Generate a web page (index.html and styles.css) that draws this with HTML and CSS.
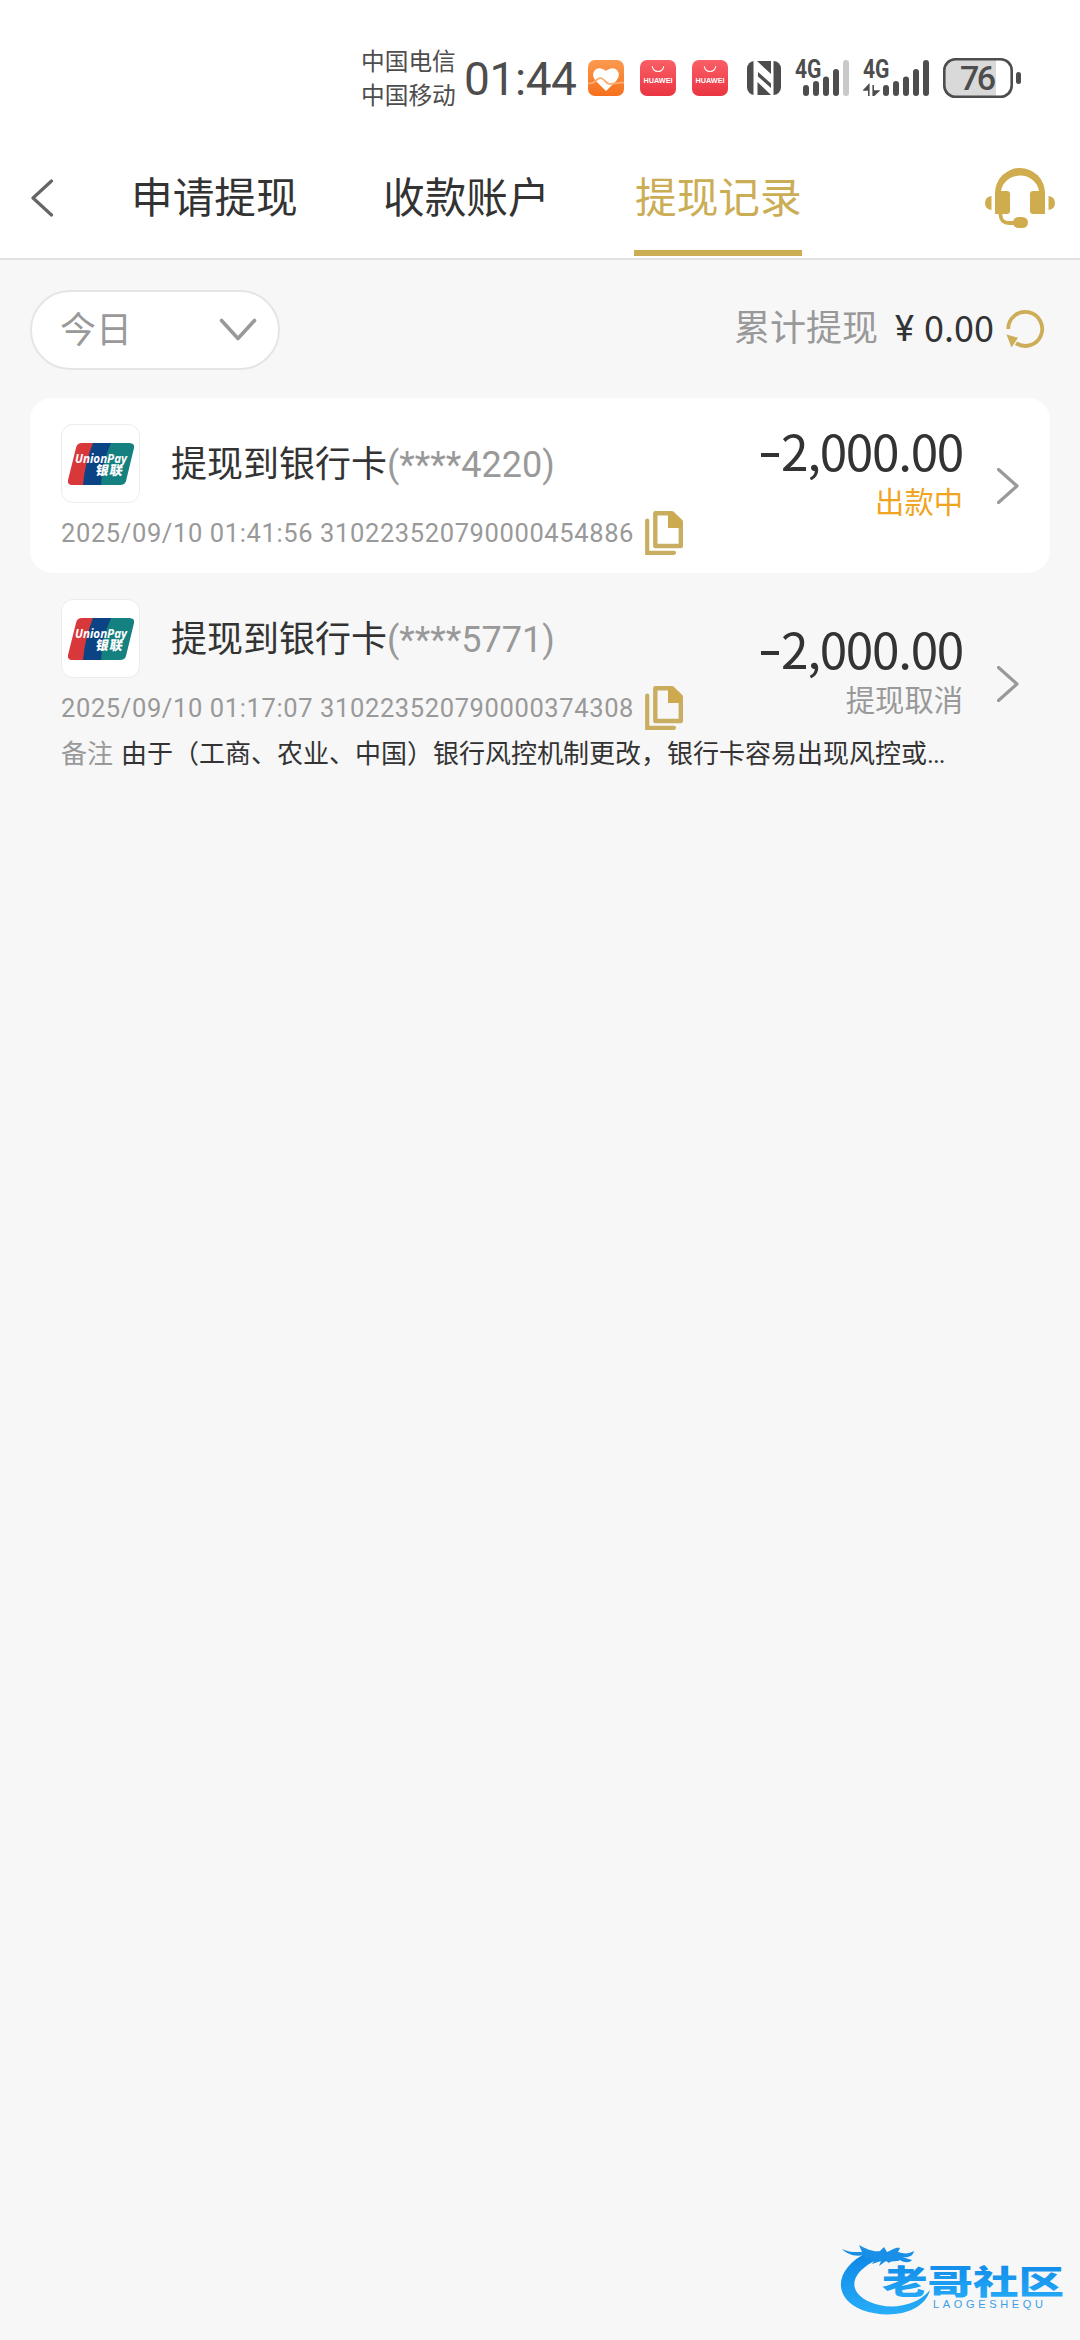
FILE: index.html
```html
<!DOCTYPE html>
<html lang="zh-CN">
<head>
<meta charset="utf-8">
<title>提现记录</title>
<link rel="stylesheet" href="styles.css">
</head>
<body>
<svg width="0" height="0" class="defs" aria-hidden="true">
  <defs>
    <linearGradient id="orange" x1="0" y1="0" x2="0" y2="1"><stop offset="0" stop-color="#fb9a4f"/><stop offset="1" stop-color="#f5701c"/></linearGradient>
    <linearGradient id="red" x1="0" y1="0" x2="0" y2="1"><stop offset="0" stop-color="#fb5f66"/><stop offset="1" stop-color="#ea3543"/></linearGradient>
    <linearGradient id="blue" x1="0" y1="0" x2="0" y2="1"><stop offset="0" stop-color="#0d86e6"/><stop offset="1" stop-color="#27adf8"/></linearGradient>
    <clipPath id="card-clip"><path d="M14 0H61Q67 0 66 5L58 38Q57 42 52 42H5Q-1 42 0 37L8 5Q9 0 14 0Z"/></clipPath>
  </defs>
  <symbol id="copy" viewBox="0 0 38 44">
    <path d="M2.2 9.500V41.800H29" fill="none" stroke="#c9ae62" stroke-width="4.200" stroke-linecap="round"/>
    <path d="M10.300 2.200H27L35.800 10.500V35H10.300Z" fill="none" stroke="#c9ae62" stroke-width="4.400" stroke-linejoin="round"/>
    <path d="M23 1H28L37 10V17H23Z" fill="#cdaa50"/>
  </symbol>
  <symbol id="unionpay" viewBox="0 0 66 42">
    <g clip-path="url(#card-clip)">
      <path d="M0 0H26L16 42H0Z" fill="#d8383a"/>
      <path d="M25 0H45L34 42H15Q17 20 25 0Z" fill="#0b4385"/>
      <path d="M43 0H66V42H33Q34 20 43 0Z" fill="#14807f"/>
    </g>
  </symbol>
  <symbol id="chev" viewBox="0 0 22 36"><path d="M1.500 1.500L20 18L1.500 34.500" fill="none" stroke="#999" stroke-width="3.200" stroke-linecap="round" stroke-linejoin="round"/></symbol>
</svg>

<header class="status">
  <div class="carriers"><span>中国电信</span><span>中国移动</span></div>
  <span class="clock">01:44</span>
  <div class="apps">
    <svg width="36" height="36" viewBox="0 0 36 36">
      <rect width="36" height="36" rx="7" fill="url(#orange)"/>
      <path d="M18 31L7.500 20.500C1 13 9 3.500 18 11C27 3.500 35 13 28.500 20.500Z" fill="#fff"/>
      <path d="M0 23Q4 24 7 21.500C12 16 14 18 18 22S23 22.500 36 22.500" fill="none" stroke="#fbac72" stroke-width="1.800"/>
    </svg>
    <svg width="36" height="36" viewBox="0 0 36 36">
      <rect width="36" height="36" rx="7" fill="url(#red)"/>
      <path d="M12.300 6.300a5.700 5.200 0 0 0 11.400 0" fill="none" stroke="#fff" stroke-width="1.100"/>
      <text x="3.500" y="23" class="huawei" textLength="29" lengthAdjust="spacingAndGlyphs">HUAWEI</text>
    </svg>
    <svg width="36" height="36" viewBox="0 0 36 36">
      <rect width="36" height="36" rx="7" fill="url(#red)"/>
      <path d="M12.300 6.300a5.700 5.200 0 0 0 11.400 0" fill="none" stroke="#fff" stroke-width="1.100"/>
      <text x="3.500" y="23" class="huawei" textLength="29" lengthAdjust="spacingAndGlyphs">HUAWEI</text>
    </svg>
  </div>
  <svg class="nfc" width="34" height="34" viewBox="0 0 34 34">
    <rect width="34" height="34" rx="7.500" fill="#4d4d4d"/>
    <path d="M6.500 0H10L24 13V0H26.500V34H24L10.500 21V34H6.500Z" fill="#fff"/>
    <path d="M11 6.500L23.500 18.500V21.500L11 10.500Z" fill="#fff"/>
    <path d="M11 11L24 22.500V27L11 15.500Z" fill="#4d4d4d"/>
  </svg>
  <svg class="sig1" width="55" height="46" viewBox="0 -10 55 46">
    <text x="0" y="18" class="net" textLength="26.500" lengthAdjust="spacingAndGlyphs">4G</text>
    <g fill="#4d4d4d"><rect x="8" y="25" width="6" height="11" rx="3"/><rect x="18" y="21" width="6" height="15" rx="3"/><rect x="28" y="16.500" width="6" height="19.500" rx="3"/><rect x="38" y="9" width="6" height="27" rx="3"/></g>
    <rect x="48" y="0" width="6" height="36" rx="3" fill="#c9c9c9"/>
  </svg>
  <svg class="sig2" width="66" height="46" viewBox="0 -10 66 46">
    <text x="0" y="18" class="net" textLength="26.500" lengthAdjust="spacingAndGlyphs">4G</text>
    <path d="M5.800 36V25L1 30H5.800M10.200 25V36L15.500 31H10.200" fill="#4d4d4d" stroke="#4d4d4d" stroke-width="1.600"/>
    <g fill="#4d4d4d"><rect x="20" y="25" width="6" height="11" rx="3"/><rect x="30" y="21" width="6" height="15" rx="3"/><rect x="40" y="16.500" width="6" height="19.500" rx="3"/><rect x="50" y="9" width="6" height="27" rx="3"/><rect x="60" y="0" width="6" height="36" rx="3"/></g>
  </svg>
  <svg class="battery" width="78" height="40" viewBox="0 0 78 40">
    <path d="M13 2H53V38H13Q2 38 2 27V13Q2 2 13 2Z" fill="#d9d9d9"/>
    <rect x="1.300" y="1.300" width="67.400" height="37.400" rx="11" fill="none" stroke="#4d4d4d" stroke-width="2.600"/>
    <rect x="73" y="14" width="5" height="12" rx="2.500" fill="#4d4d4d"/>
    <text x="17" y="32" class="level" textLength="36">76</text>
  </svg>
</header>

<nav class="nav">
  <svg class="back" width="24" height="38" viewBox="0 0 24 38"><path d="M21.500 2L3 19L21.500 36" fill="none" stroke="#666" stroke-width="3.200" stroke-linecap="round" stroke-linejoin="round"/></svg>
  <div class="tabs">
    <a class="tab">申请提现</a>
    <a class="tab">收款账户</a>
    <a class="tab active">提现记录</a>
  </div>
  <svg class="headset" width="70" height="60" viewBox="0 0 70 60" fill="#cfad4f">
    <path d="M10 46V25A25 25 0 0 1 60 25V46H48Q45 46 45 43V26Q45 23 48 23H54A19.200 18 0 0 0 16 23H22Q25 23 25 26V43Q25 46 22 46Z"/>
    <path d="M6.500 28V42Q0 41 0 35T6.500 28ZM63.500 28V42Q70 41 70 35T63.500 28Z"/>
    <path d="M15.500 45V47Q16 55 24 55H31" fill="none" stroke="#cfad4f" stroke-width="3.800"/>
    <rect x="28" y="49" width="15" height="11" rx="5.500"/>
  </svg>
</nav>

<main class="content">
  <section class="filter">
    <div class="picker"><span>今日</span>
      <svg width="38" height="24" viewBox="0 0 38 24"><path d="M2.500 2.500L19 20.500L35.500 2.500" fill="none" stroke="#999" stroke-width="3.600" stroke-linecap="round" stroke-linejoin="round"/></svg>
    </div>
    <div class="total">
      <span class="total-label">累计提现</span><span class="yen">¥</span><span class="total-num">0.00</span>
      <svg width="40" height="40" viewBox="0 0 40 40"><path d="M3.200 20A17 17 0 1 1 11 34.200" fill="none" stroke="#cdad58" stroke-width="3.800"/><path d="M1.500 25.500L13 28.800L6.500 38.500Z" fill="#cdad58"/></svg>
    </div>
  </section>

  <article class="record white">
    <div class="info">
      <div class="head">
        <div class="bank">
          <svg width="66" height="42" viewBox="0 0 66 42">
            <use href="#unionpay"/>
            <text x="7" y="20" class="up-en" textLength="52" lengthAdjust="spacingAndGlyphs">UnionPay</text>
            <text class="up-cn" transform="translate(27 31.500) skewX(-10)" textLength="27">银联</text>
          </svg>
        </div>
        <h2 class="title">提现到银行卡<span class="num">(****4220)</span></h2>
      </div>
      <div class="meta"><span>2025/09/10 01:41:56 <span class="order">310223520790000454886</span></span><svg width="38" height="44"><use href="#copy"/></svg></div>
    </div>
    <div class="side">
      <div class="amount"><i class="minus"></i>2,000.00</div>
      <div class="state pending">出款中</div>
    </div>
    <svg class="go" width="22" height="36"><use href="#chev"/></svg>
  </article>

  <article class="record noted">
    <div class="info">
      <div class="head">
        <div class="bank">
          <svg width="66" height="42" viewBox="0 0 66 42">
            <use href="#unionpay"/>
            <text x="7" y="20" class="up-en" textLength="52" lengthAdjust="spacingAndGlyphs">UnionPay</text>
            <text class="up-cn" transform="translate(27 31.500) skewX(-10)" textLength="27">银联</text>
          </svg>
        </div>
        <h2 class="title">提现到银行卡<span class="num">(****5771)</span></h2>
      </div>
      <div class="meta"><span>2025/09/10 01:17:07 <span class="order">310223520790000374308</span></span><svg width="38" height="44"><use href="#copy"/></svg></div>
      <p class="note"><span class="note-label">备注</span>由于（工商、农业、中国）银行风控机制更改，银行卡容易出现风控或<span class="dots">...</span></p>
    </div>
    <div class="side">
      <div class="amount"><i class="minus"></i>2,000.00</div>
      <div class="state">提现取消</div>
    </div>
    <svg class="go" width="22" height="36"><use href="#chev"/></svg>
  </article>
</main>

<svg class="watermark" width="226" height="72" viewBox="0 0 226 72">
  <path d="M28 8C-5 24-9 53 22 66C50 76 84 69 90 46C77 62 50 67 30 58C7 48 9 29 38 15Z" fill="url(#blue)"/>
  <path d="M2 5C10 9 16 8 22 8L19 1C28 6 34 8 40 7L44 3L47 8C53 6 55 3 60 4L58 8C64 10 69 10 74 7C73 12 69 14 62 13L72 16C70 19 64 19 60 16C58 18 52 16 49 19L46 17L39 22L41 17L32 20L35 15C28 16 25 14 24 11C14 13 7 10 2 5Z" fill="#1a8fe8"/>
  <text x="42" y="49.500" class="wm-cn" textLength="182" lengthAdjust="spacingAndGlyphs">老哥社区</text>
  <text x="93" y="63.500" class="wm-en" textLength="110">LAOGESHEQU</text>
</svg>
</body>
</html>
```

FILE: styles.css
```css
* { box-sizing: border-box; }

body {
  margin: 0;
  width: 1080px;
  height: 2340px;
  display: flex;
  flex-direction: column;
  background: #f7f7f7;
  color: #333;
  font-family: Roboto, "Noto Sans CJK SC", sans-serif;
  overflow: hidden;
}

svg { display: block; flex: none; }
.defs { position: absolute; }

/* status bar */
.status {
  height: 150px;
  padding: 6px 59px 0 361px;
  display: flex;
  align-items: flex-start;
  background: #fff;
  color: #4d4d4d;
}
.carriers {
  display: flex;
  flex-direction: column;
  width: 103px;
  margin-top: 39px;
  font-size: 23.7px;
  line-height: 34px;
}
.clock {
  width: 124px;
  margin-top: 48px;
  font-size: 46px;
  line-height: 50px;
  letter-spacing: -0.4px;
  white-space: nowrap;
}
.apps { display: flex; gap: 16px; margin-top: 54px; }
.nfc { margin: 55px 0 0 19px; }
.sig1 { margin: 44px 0 0 14px; }
.sig2 { margin: 44px 0 0 13px; }
.battery { margin: 52px 0 0 14px; }
.huawei { font: 700 6.500px "Liberation Sans", sans-serif; fill: #fff; }
.net { font: 700 25px Roboto, sans-serif; fill: #4d4d4d; }
.level { font: 500 34px Roboto, sans-serif; fill: #4d4d4d; }

/* top navigation */
.nav {
  height: 110px;
  padding: 0 25px 0 30px;
  display: flex;
  align-items: flex-start;
  background: #fff;
  border-bottom: 2px solid #e2e2e2;
}
.back { margin-top: 29px; }
.tabs { display: flex; gap: 84px; margin-left: 76px; flex: 1; }
.tab {
  width: 168px;
  height: 106px;
  padding-left: 1px;
  font-size: 41.700px;
  line-height: 97px;
  white-space: nowrap;
}
.active { color: #cbad56; border-bottom: 6px solid #cbad56; }
.headset { margin-top: 18px; }

/* filter row */
.content { padding: 30px 30px 0; }
.filter { display: flex; justify-content: space-between; height: 108px; }
.picker {
  width: 250px;
  height: 80px;
  padding: 0 21px 0 28px;
  display: flex;
  align-items: center;
  justify-content: space-between;
  background: #fff;
  border: 2px solid #e5e5e5;
  border-radius: 40px;
  color: #999;
  font-size: 36px;
  line-height: 76px;
}
.picker span { padding-top: 1px; }
.total {
  display: flex;
  align-items: center;
  height: 78px;
  padding-right: 5px;
  font-size: 36px;
  line-height: 78px;
}
.total-label { color: #999; }
.yen { margin-left: 17px; width: 29px; }
.total-num {
  font-family: "Noto Sans CJK SC", sans-serif;
  font-size: 36px;
  letter-spacing: 0;
  margin-right: 11px;
  padding-bottom: 7px;
}

/* records */
.record {
  display: flex;
  align-items: center;
  height: 175px;
  padding: 0 31px;
  border-radius: 22px;
}
.white { background: #fff; }
.noted { height: 221px; }
.info { width: 660px; align-self: flex-start; padding-top: 26px; }
.head { display: flex; align-items: center; height: 79px; }
.bank {
  width: 79px;
  height: 79px;
  display: flex;
  align-items: center;
  justify-content: center;
  background: #fff;
  border: 1px solid #ececec;
  border-radius: 12px;
}
.up-en { font: italic 700 12.500px "Open Sans", sans-serif; fill: #fff; }
.up-cn { font: 900 13px "Noto Sans CJK SC", sans-serif; fill: #fff; }
.title {
  margin: 3px 0 0 31px;
  font-size: 36px;
  font-weight: 400;
  line-height: 76px;
  white-space: nowrap;
}
.num { color: #999; letter-spacing: 0; }
.meta {
  display: flex;
  align-items: center;
  gap: 11px;
  height: 44px;
  margin-top: 8px;
  color: #999;
  font-size: 25.500px;
  letter-spacing: 0.620px;
  white-space: nowrap;
}
.meta span { line-height: 46px; }
.note { margin: 7px 0 0; font-size: 26px; line-height: 34px; white-space: nowrap; }
.note-label { color: #999; margin-right: 8px; }
.dots { letter-spacing: -1px; }
.side { flex: 1; text-align: right; padding-bottom: 19px; }
.amount {
  display: flex;
  align-items: center;
  justify-content: flex-end;
  height: 54px;
  padding-bottom: 8px;
  font-family: "Noto Sans CJK SC", sans-serif;
  font-size: 49.500px;
  line-height: 54px;
  letter-spacing: -1.300px;
}
.minus { width: 18px; height: 4px; margin: 10px 2px 0 0; background: #333; }
.state { color: #999; font-size: 29.300px; line-height: 44px; }
.pending { color: #f0a41f; }
.go { margin-left: 34px; }

.watermark { position: absolute; left: 840px; top: 2244px; }
.wm-cn { font: 900 33px "Noto Sans CJK SC", sans-serif; fill: url(#blue); }
.wm-en { font: 400 11px "Liberation Sans", sans-serif; fill: #3a9de8; }
```
